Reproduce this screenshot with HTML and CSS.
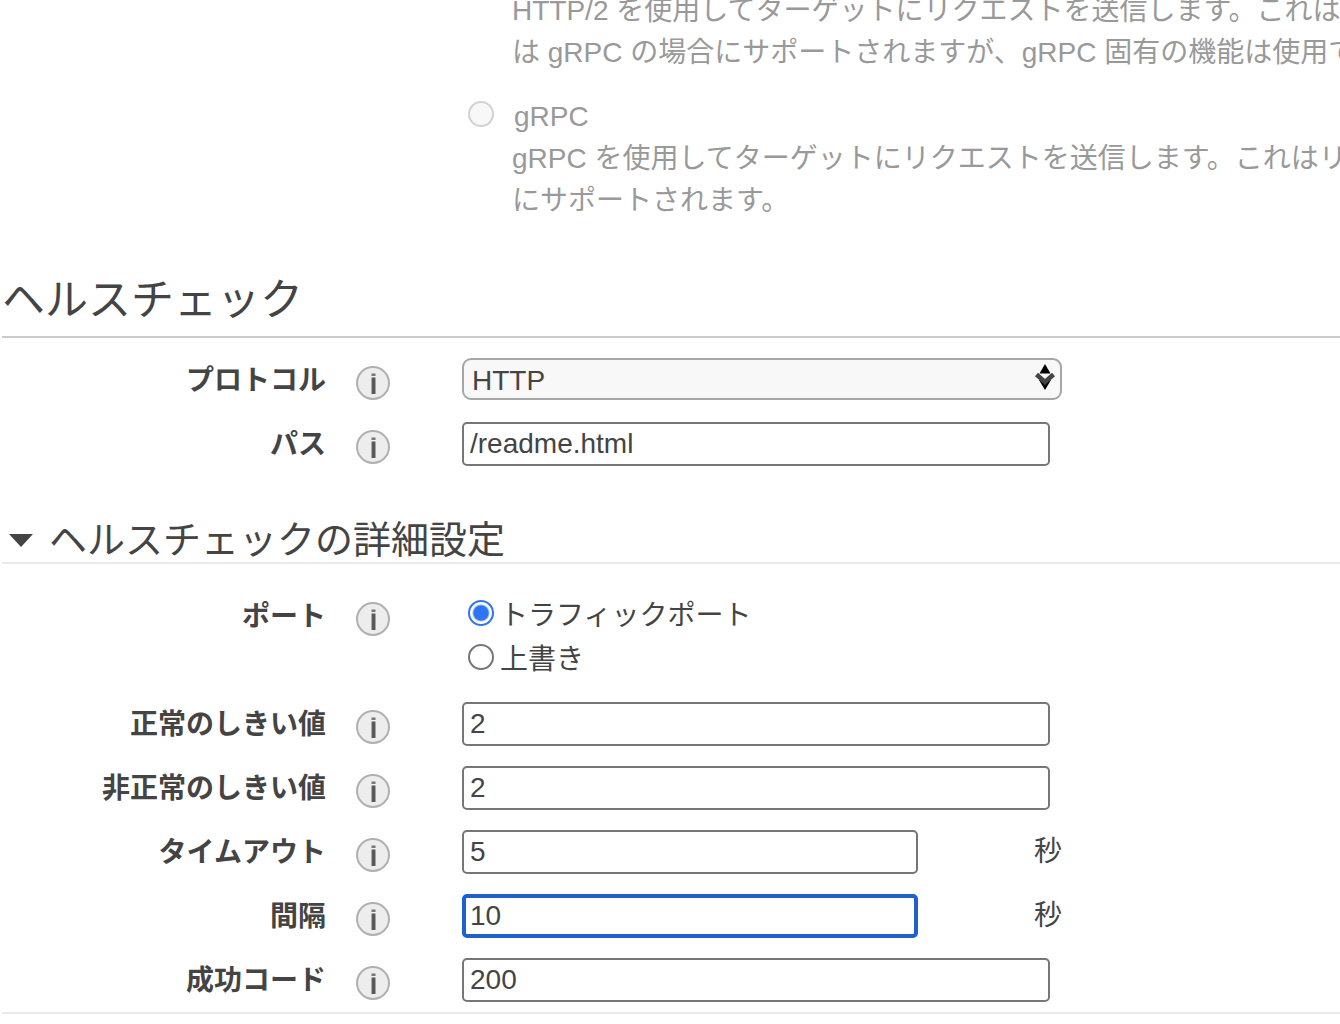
FILE: index.html
```html
<!DOCTYPE html>
<html lang="ja">
<head>
  <meta charset="UTF-8">
  <meta name="viewport" content="width=device-width, initial-scale=1.0">
  <title>ヘルスチェック</title>
  <link rel="stylesheet" href="styles.css">
</head>
<body>
  <!-- Shared icon for the help buttons -->
  <svg class="sprite" aria-hidden="true">
    <symbol id="info" viewBox="0 0 34 34">
      <circle cx="17" cy="17" r="16" fill="#ededed" stroke="#b0b0b0" stroke-width="2" />
      <rect x="15.5" y="7.5" width="4" height="2.5" fill="#777" />
      <rect x="15" y="11.5" width="1.5" height="16.5" fill="#aaa" />
      <rect x="16" y="11.5" width="3.5" height="16.5" fill="#5a5a5a" />
    </symbol>
  </svg>

  <main class="page">
    <!-- Protocol version -->
    <section class="versions">
      <div class="version">
        <p class="version-text">
          <span>HTTP/2 を使用してターゲットにリクエストを送信します。これは</span>
          <span>は gRPC の場合にサポートされますが、gRPC 固有の機能は使用で</span>
        </p>
      </div>
      <div class="version">
        <label class="radio version-name">
          <input type="radio" name="version" disabled>
          gRPC
        </label>
        <p class="version-text">
          <span>gRPC を使用してターゲットにリクエストを送信します。これはリ</span>
          <span>にサポートされます。</span>
        </p>
      </div>
    </section>

    <!-- Health check -->
    <section>
      <h1>ヘルスチェック</h1>
      <div class="rows">
        <div class="row">
          <label class="name" for="protocol">プロトコル</label>
          <button type="button" class="info" aria-label="プロトコル"><svg><use href="#info" /></svg></button>
          <div class="field">
            <div class="select">
              <select id="protocol">
                <option>HTTP</option>
                <option>HTTPS</option>
              </select>
              <svg class="arrows" viewBox="0 0 20 26" aria-hidden="true">
                <path d="M10 0L15.5 9.5H4.5Z" fill="#000" />
                <path d="M10 26L16 16H4Z" fill="#000" />
                <path d="M1.5 10.5L10 18L18.5 10.5" fill="none" stroke="#444" stroke-width="4.5" />
              </svg>
            </div>
          </div>
        </div>
        <div class="row">
          <label class="name" for="path">パス</label>
          <button type="button" class="info" aria-label="パス"><svg><use href="#info" /></svg></button>
          <div class="field">
            <input type="text" id="path" value="/readme.html">
          </div>
        </div>
      </div>
    </section>

    <!-- Advanced settings -->
    <section class="advanced">
      <h2>
        <button type="button" class="toggle" aria-expanded="true">
          <svg viewBox="0 0 24 13" aria-hidden="true"><path d="M0 0H24L12 13Z" fill="#444" /></svg>
          ヘルスチェックの詳細設定
        </button>
      </h2>
      <div class="rows">
        <div class="row" role="radiogroup" aria-labelledby="port-name">
          <span class="name" id="port-name">ポート</span>
          <button type="button" class="info" aria-label="ポート"><svg><use href="#info" /></svg></button>
          <div class="radios">
            <label class="radio"><input type="radio" name="port" checked>トラフィックポート</label>
            <label class="radio"><input type="radio" name="port">上書き</label>
          </div>
        </div>
        <div class="row">
          <label class="name" for="healthy">正常のしきい値</label>
          <button type="button" class="info" aria-label="正常のしきい値"><svg><use href="#info" /></svg></button>
          <div class="field">
            <input type="text" id="healthy" value="2">
          </div>
        </div>
        <div class="row">
          <label class="name" for="unhealthy">非正常のしきい値</label>
          <button type="button" class="info" aria-label="非正常のしきい値"><svg><use href="#info" /></svg></button>
          <div class="field">
            <input type="text" id="unhealthy" value="2">
          </div>
        </div>
        <div class="row">
          <label class="name" for="timeout">タイムアウト</label>
          <button type="button" class="info" aria-label="タイムアウト"><svg><use href="#info" /></svg></button>
          <div class="field">
            <input type="text" id="timeout" class="short" value="5">
            <span class="unit">秒</span>
          </div>
        </div>
        <div class="row">
          <label class="name" for="interval">間隔</label>
          <button type="button" class="info" aria-label="間隔"><svg><use href="#info" /></svg></button>
          <div class="field">
            <input type="text" id="interval" class="short active" value="10">
            <span class="unit">秒</span>
          </div>
        </div>
        <div class="row">
          <label class="name" for="codes">成功コード</label>
          <button type="button" class="info" aria-label="成功コード"><svg><use href="#info" /></svg></button>
          <div class="field">
            <input type="text" id="codes" value="200">
          </div>
        </div>
      </div>
    </section>
  </main>
</body>
</html>
```
FILE: styles.css
```css
* {
  box-sizing: border-box;
}

body {
  margin: 0;
  background: #fff;
  color: #444;
  font-family: "Liberation Sans", "Noto Sans CJK JP", sans-serif;
  font-size: 28px;
  line-height: 42px;
}

input,
select,
button {
  margin: 0;
  color: inherit;
  font: inherit;
}

button {
  padding: 0;
  border: 0;
  background: none;
  cursor: pointer;
}

.sprite {
  display: none;
}

.page {
  padding-left: 2px;
  overflow: hidden;
}

/* Protocol version */
.versions {
  display: flex;
  flex-direction: column;
  gap: 22px;
  margin-top: -10px;
  padding-left: 466px;
  color: #999;
  white-space: nowrap;
}

.version-text {
  margin: 0;
  padding-left: 44px;
}

.version-text span {
  display: block;
}

.radio.version-name {
  gap: 20px;
  height: 42px;
}

/* Headings */
h1 {
  margin: 48px 0 0;
  padding-bottom: 6px;
  border-bottom: 2px solid #ccc;
  font-size: 43px;
  font-weight: normal;
  line-height: 60px;
}

h2 {
  margin: 52px 0 0;
  border-bottom: 2px solid #eaeaea;
  font-size: 38px;
  font-weight: normal;
  line-height: 44px;
}

.toggle {
  display: flex;
  align-items: center;
  gap: 16px;
  padding-left: 7px;
}

.toggle svg {
  width: 24px;
  height: 13px;
}

/* Form rows */
.rows {
  display: flex;
  flex-direction: column;
  gap: 20px;
  padding-top: 20px;
}

.advanced {
  border-bottom: 2px solid #eaeaea;
}

.advanced .rows {
  padding: 30px 0 10px;
}

.row {
  display: grid;
  grid-template-columns: 324px 136px minmax(0, 600px);
  align-items: start;
}

.name {
  font-weight: bold;
  line-height: 46px;
  height: 44px;
  text-align: right;
}

.info {
  width: 34px;
  height: 34px;
  margin: 8px 0 0 30px;
}

.info svg {
  display: block;
  width: 34px;
  height: 34px;
}

.field {
  display: flex;
  align-items: center;
  justify-content: space-between;
  height: 44px;
}

.unit {
  line-height: 40px;
}

input[type="text"] {
  width: 98%;
  height: 44px;
  padding: 0 6px;
  border: 2px solid #767676;
  border-radius: 5px;
  background: #fff;
}

input[type="text"].short {
  width: 76%;
}

input[type="text"].active,
input[type="text"]:focus {
  padding: 0 4px;
  border: 4px solid #1f5fd0;
  outline: none;
}

/* Drop-down */
.select {
  position: relative;
  width: 100%;
  height: 44px;
}

select {
  width: 100%;
  height: 42px;
  padding: 0 40px 0 8px;
  border: 2px solid #a6a6a6;
  border-radius: 9px;
  background: #f8f8f8;
  appearance: none;
}

.arrows {
  position: absolute;
  top: 6px;
  right: 7px;
  width: 20px;
  height: 26px;
  pointer-events: none;
}

/* Radio buttons */
.radio {
  display: flex;
  align-items: center;
  gap: 6px;
  height: 44px;
}

.radios .radio {
  padding-left: 6px;
}

input[type="radio"] {
  width: 26px;
  height: 26px;
  margin-bottom: 6px;
  border: 2px solid #767676;
  border-radius: 50%;
  background: #fff;
  appearance: none;
}

input[type="radio"]:checked {
  border-color: #2e74f5;
  background: radial-gradient(circle, #2e74f5 7px, #fff 9px);
}

input[type="radio"]:disabled {
  border-color: #d2d2d2;
  background: #f8f8f8;
}
```
